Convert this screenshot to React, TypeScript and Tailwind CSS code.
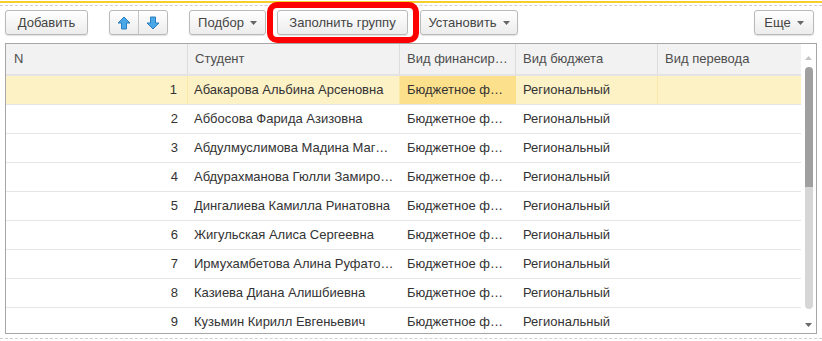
import React from "react";

// Column widths taken from the form layout
const COLS = [
  { key: "n", label: "N", w: "w-[182px]" },
  { key: "student", label: "Студент", w: "w-[212px]" },
  { key: "fin", label: "Вид финансирования", w: "w-[116px]" },
  { key: "budget", label: "Вид бюджета", w: "w-[142px]" },
  { key: "transfer", label: "Вид перевода", w: "flex-1" },
];

const STUDENTS = [
  "Абакарова Альбина Арсеновна",
  "Аббосова Фарида Азизовна",
  "Абдулмуслимова Мадина Магомедовна",
  "Абдурахманова Гюлли Замировна",
  "Дингалиева Камилла Ринатовна",
  "Жигульская Алиса Сергеевна",
  "Ирмухамбетова Алина Руфатовна",
  "Казиева Диана Алишбиевна",
  "Кузьмин Кирилл Евгеньевич",
];

const Caret = () => (
  <svg width="7" height="4" viewBox="0 0 7 4" className="ml-[6px] mt-[1px]">
    <path d="M0 0h7L3.5 4z" fill="#666" />
  </svg>
);

function Btn({ children, className = "" }: { children: React.ReactNode; className?: string }) {
  return (
    <button
      className={`h-[25px] flex items-center justify-center rounded-[3px] border border-[#b9b9b9]
                  bg-gradient-to-b from-white to-[#ececec] text-[13px] text-[#444]
                  shadow-[0_1px_1px_rgba(0,0,0,0.12)] ${className}`}
    >
      {children}
    </button>
  );
}

const Arrow = ({ down = false }: { down?: boolean }) => (
  <svg width="14" height="14" viewBox="0 0 14 14" className={down ? "rotate-180" : ""}>
    <path d="M7 1L13 7H9.5V13H4.5V7H1Z" fill="#4aa8e6" stroke="#2b7fc0" strokeWidth="1" strokeLinejoin="round" />
  </svg>
);

export default function App() {
  return (
    <div
      className="relative w-[822px] h-[341px] bg-white overflow-hidden"
      style={{ fontFamily: '"Liberation Sans", Arial, sans-serif' }}
    >
      {/* top accent + dashed separator */}
      <div className="h-[2px] mt-[1px] bg-[#f7cf2a]" />
      <div className="mt-[2px] border-t border-dashed border-[#cfcfcf]" />

      {/* Command bar */}
      <div className="flex items-center h-[25px] mt-[4px] pl-[5px] pr-[8px]">
        <Btn className="w-[83px]">Добавить</Btn>
        <div className="ml-[21px] flex h-[25px] w-[59px] rounded-[3px] border border-[#b9b9b9] bg-gradient-to-b from-white to-[#ececec] shadow-[0_1px_1px_rgba(0,0,0,0.12)]">
          <div className="w-[29px] flex items-center justify-center border-r border-[#c4c4c4]">
            <Arrow />
          </div>
          <div className="flex-1 flex items-center justify-center">
            <Arrow down />
          </div>
        </div>
        <Btn className="ml-[21px] w-[77px]">
          Подбор
          <Caret />
        </Btn>
        <Btn className="ml-[11px] w-[131px]">Заполнить группу</Btn>
        <Btn className="ml-[12px] w-[98px]">
          Установить
          <Caret />
        </Btn>
        <div className="flex-1" />
        <Btn className="w-[60px]">
          Еще
          <Caret />
        </Btn>
      </div>

      {/* Table */}
      <div className="mt-[8px] mx-[5px] w-[812px] h-[291px] border border-[#a6a6a6] flex text-[13px] text-[#333]">
        <div className="flex-1 flex flex-col min-w-0 overflow-hidden">
          <div className="flex h-[32px] shrink-0 bg-[#f2f2f2] border-b-2 border-[#e4e4e4] text-[#4d4d4d]">
            {COLS.map((c, i) => (
              <div
                key={c.key}
                className={`${c.w} flex items-center min-w-0 ${i === 0 ? "pl-[8px]" : "pl-[7px]"} ${
                  i < COLS.length - 1 ? "border-r border-[#dcdcdc]" : ""
                }`}
              >
                <span className="truncate pr-[4px]">{c.label}</span>
              </div>
            ))}
          </div>
          {STUDENTS.map((name, idx) => {
            const sel = idx === 0;
            return (
              <div
                key={name}
                className={`flex h-[29px] shrink-0 border-b border-[#e6e6e6] ${sel ? "bg-[#fdf1c6]" : ""}`}
              >
                <div className={`w-[182px] flex items-center justify-end pr-[10px] ${sel ? "border-r border-[#fbe7a8]" : ""}`}>
                  {idx + 1}
                </div>
                <div className={`w-[212px] flex items-center pl-[6px] min-w-0 ${sel ? "border-r border-[#fbe7a8]" : ""}`}>
                  <span className="truncate pr-[6px]">{name}</span>
                </div>
                <div className={`w-[116px] flex items-center pl-[7px] min-w-0 ${sel ? "bg-[#fde08c]" : ""}`}>
                  <span className="truncate pr-[8px]">Бюджетное финансирование</span>
                </div>
                <div className={`w-[142px] flex items-center pl-[7px] ${sel ? "border-r border-[#fbe7a8]" : ""}`}>
                  Региональный
                </div>
                <div className="flex-1" />
              </div>
            );
          })}
        </div>
        {/* Scrollbar */}
        <div className="w-[15px] flex flex-col items-center pt-[12px] pb-[6px]">
          <svg width="7" height="4" viewBox="0 0 7 4">
            <path d="M3.5 0L7 4H0z" fill="#c4c4c4" />
          </svg>
          <div className="mt-[7px] w-[8px] h-[120px] bg-[#a0a0a0] rounded-t-[4px]" />
          <div className="w-[8px] h-[122px] bg-[#d6d6d6] rounded-b-[4px]" />
          <div className="flex-1" />
          <svg width="7" height="4" viewBox="0 0 7 4">
            <path d="M0 0h7L3.5 4z" fill="#6a6a6a" />
          </svg>
        </div>
      </div>

      {/* bottom dashed separator */}
      <div className="mt-[4px] border-t border-dashed border-[#cfcfcf]" />

      {/* Red hand-drawn highlight over "Заполнить группу" */}
      <div className="absolute left-[267px] top-[2px] w-[152px] h-[41px] border-[6px] border-[#ff0000] rounded-[10px]" />
    </div>
  );
}
